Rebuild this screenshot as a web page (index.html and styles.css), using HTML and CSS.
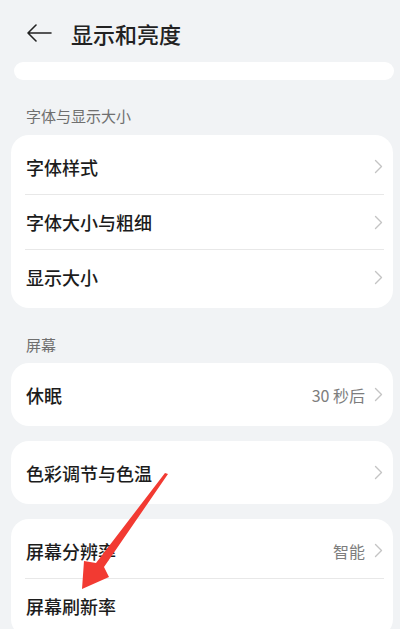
FILE: index.html
```html
<!DOCTYPE html>
<html lang="zh">
<head>
    <meta charset="UTF-8">
    <meta name="viewport" content="width=device-width, initial-scale=1.0">
    <title>显示和亮度</title>
    <link rel="stylesheet" href="styles.css">
</head>
<body>
    <div class="header">
        <svg class="back" width="26" height="18" viewBox="0 0 26 18">
            <path d="M25 9H2M10 1L2 9l8 8" fill="none" stroke="#222" stroke-width="1.6" stroke-linecap="round" stroke-linejoin="round"/>
        </svg>
        <div class="title">显示和亮度</div>
    </div>
    <div class="strip"></div>

    <div class="section-label first">字体与显示大小</div>
    <div class="card">
        <div class="row"><span class="name">字体样式</span><svg class="chev" width="9" height="15" viewBox="0 0 9 15"><path d="M1.5 1.5l6 6-6 6" fill="none" stroke="#c4c4c4" stroke-width="1.4" stroke-linecap="round" stroke-linejoin="round"/></svg></div>
        <div class="row line"><span class="name">字体大小与粗细</span><svg class="chev" width="9" height="15" viewBox="0 0 9 15"><path d="M1.5 1.5l6 6-6 6" fill="none" stroke="#c4c4c4" stroke-width="1.4" stroke-linecap="round" stroke-linejoin="round"/></svg></div>
        <div class="row line"><span class="name">显示大小</span><svg class="chev" width="9" height="15" viewBox="0 0 9 15"><path d="M1.5 1.5l6 6-6 6" fill="none" stroke="#c4c4c4" stroke-width="1.4" stroke-linecap="round" stroke-linejoin="round"/></svg></div>
    </div>

    <div class="section-label">屏幕</div>
    <div class="card">
        <div class="row"><span class="name">休眠</span><span class="value">30 秒后</span><svg class="chev" width="9" height="15" viewBox="0 0 9 15"><path d="M1.5 1.5l6 6-6 6" fill="none" stroke="#c4c4c4" stroke-width="1.4" stroke-linecap="round" stroke-linejoin="round"/></svg></div>
    </div>
    <div class="card gap">
        <div class="row"><span class="name">色彩调节与色温</span><svg class="chev" width="9" height="15" viewBox="0 0 9 15"><path d="M1.5 1.5l6 6-6 6" fill="none" stroke="#c4c4c4" stroke-width="1.4" stroke-linecap="round" stroke-linejoin="round"/></svg></div>
    </div>
    <div class="card gap">
        <div class="row"><span class="name">屏幕分辨率</span><span class="value">智能</span><svg class="chev" width="9" height="15" viewBox="0 0 9 15"><path d="M1.5 1.5l6 6-6 6" fill="none" stroke="#c4c4c4" stroke-width="1.4" stroke-linecap="round" stroke-linejoin="round"/></svg></div>
        <div class="row line"><span class="name">屏幕刷新率</span></div>
    </div>

    <!-- 红色箭头标注 -->
    <svg class="mark" width="400" height="629" viewBox="0 0 400 629">
        <polygon points="168,474 104,567 109,577 82,589 84,561 96,563 165,473" fill="#f23a32"/>
    </svg>
</body>
</html>
```

FILE: styles.css
```css
body{
    margin: 0;
    background: #f1f3f5;
    font-family: "Noto Sans CJK SC", "Noto Sans", sans-serif;
    color: #1c1c1c;
    height: 629px;
    overflow: hidden;
    position: relative;
}
.header{
    display: flex;
    align-items: center;
    height: 58px;
    padding-top: 4px;
    padding-left: 26px;
}
.back{
    display: block;
}
.title{
    margin-left: 19px;
    font-size: 22px;
    line-height: 30px;
    font-weight: 500;
    color: #222;
}
.strip{
    margin: 0 6px 0 14px;
    height: 18px;
    background: #ffffff;
    border-radius: 10px;
}
.section-label{
    margin: 27px 0 8px 26px;
    font-size: 15px;
    line-height: 20px;
    color: #6f6f6f;
}
.section-label.first{
    margin-top: 26px;
    margin-bottom: 9px;
}
.card{
    margin-left: 11px;
    width: 382px;
    background: #ffffff;
    border-radius: 18px;
    padding: 4px 0;
}
.card.gap{
    margin-top: 15px;
}
.row{
    display: flex;
    align-items: center;
    height: 55px;
    margin: 0 9px 0 14px;
    padding-left: 1px;
}
.row.line{
    border-top: 1px solid #e8e8e8;
    height: 54px;
}
.name{
    flex: 1;
    font-size: 18px;
    line-height: 24px;
    font-weight: 500;
}
.value{
    font-size: 16px;
    color: #7d7d7d;
    margin-right: 9px;
    margin-top: 1px;
}
.chev{
    display: block;
    margin-right: 1px;
}
.mark{
    position: absolute;
    left: 0;
    top: 0;
    pointer-events: none;
}
```
